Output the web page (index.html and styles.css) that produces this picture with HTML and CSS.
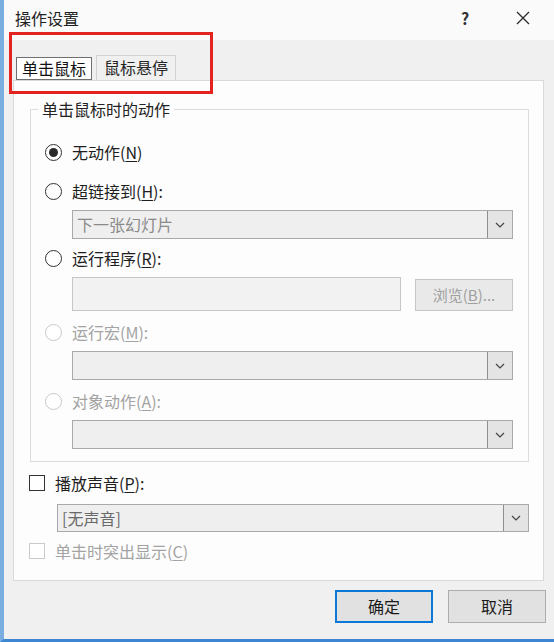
FILE: index.html
```html
<!DOCTYPE html>
<html lang="zh-CN">
<head>
  <meta charset="UTF-8">
  <title>操作设置</title>
  <link rel="stylesheet" href="styles.css">
</head>
<body>

  <div class="window">
    <div class="titlebar">
      <span class="title">操作设置</span>
      <span class="help">?</span>
      <span class="close">
        <svg width="14" height="14" viewBox="0 0 14 14"><path d="M1 1L13 13M13 1L1 13" stroke="#2b2b2b" stroke-width="1.3" fill="none"/></svg>
      </span>
    </div>

    <div class="content">
      <div class="tabs">
        <div class="tab active">单击鼠标</div>
        <div class="tab">鼠标悬停</div>
      </div>

      <div class="panel">
        <fieldset class="group">
          <legend>单击鼠标时的动作</legend>

          <div class="row first"><span class="radio checked"></span><span>无动作(<u>N</u>)</span></div>

          <div class="row gap"><span class="radio"></span><span>超链接到(<u>H</u>):</span></div>
          <div class="select">
            <span class="value">下一张幻灯片</span>
            <span class="arrow"><svg width="10" height="6" viewBox="0 0 10 6"><path d="M1 1L5 5L9 1" stroke="#444" stroke-width="1.2" fill="none"/></svg></span>
          </div>

          <div class="row"><span class="radio"></span><span>运行程序(<u>R</u>):</span></div>
          <div class="field-row">
            <div class="input"></div>
            <div class="browse">浏览(<u>B</u>)...</div>
          </div>

          <div class="row off"><span class="radio"></span><span>运行宏(<u>M</u>):</span></div>
          <div class="select">
            <span class="value"></span>
            <span class="arrow"><svg width="10" height="6" viewBox="0 0 10 6"><path d="M1 1L5 5L9 1" stroke="#444" stroke-width="1.2" fill="none"/></svg></span>
          </div>

          <div class="row off"><span class="radio"></span><span>对象动作(<u>A</u>):</span></div>
          <div class="select">
            <span class="value"></span>
            <span class="arrow"><svg width="10" height="6" viewBox="0 0 10 6"><path d="M1 1L5 5L9 1" stroke="#444" stroke-width="1.2" fill="none"/></svg></span>
          </div>
        </fieldset>

        <div class="check-row"><span class="checkbox"></span><span>播放声音(<u>P</u>):</span></div>
        <div class="select sound">
          <span class="value">[无声音]</span>
          <span class="arrow"><svg width="10" height="6" viewBox="0 0 10 6"><path d="M1 1L5 5L9 1" stroke="#444" stroke-width="1.2" fill="none"/></svg></span>
        </div>
        <div class="check-row off"><span class="checkbox"></span><span>单击时突出显示(<u>C</u>)</span></div>
      </div>

      <div class="buttons">
        <div class="btn primary">确定</div>
        <div class="btn">取消</div>
      </div>
    </div>

    <!-- 红色标注框 -->
    <div class="highlight"></div>
  </div>

</body>
</html>
```

FILE: styles.css
```css
* {
  box-sizing: border-box;
}
body {
  margin: 0;
  font-family: "Noto Sans CJK SC", "Noto Sans", sans-serif;
  font-size: 16px;
  color: #1e1e1e;
  background: #f0f0f0;
}
u {
  text-decoration-thickness: 1px;
  text-underline-offset: 2px;
}
.window {
  position: relative;
  width: 554px;
  height: 642px;
  background: #f0f0f0;
  border-left: 4px solid #7aaee0;
  border-bottom: 3px solid #3d86d4;
}
.titlebar {
  height: 40px;
  background: #fafafa;
  display: flex;
  align-items: center;
  padding: 0 24px 4px 11px;
}
.title {
  color: #222;
}
.help {
  margin-left: auto;
  width: 8px;
  font-weight: bold;
  color: #333;
}
.close {
  margin-left: 47px;
  display: flex;
}
.content {
  padding: 15px 8px 0 9px;
}
.tabs {
  display: flex;
  align-items: flex-end;
  gap: 4px;
  height: 25px;
  padding-left: 3px;
}
.tab {
  height: 25px;
  padding: 0 7px;
  line-height: 23px;
  border: 1px solid #d3d3d3;
  border-bottom: none;
  background: #f0f0f0;
  color: #262626;
}
.tab.active {
  height: 23px;
  padding: 0 5px;
  line-height: 21px;
  border: 1px solid #6f6f6f;
  background: #fff;
  color: #111;
}
.panel {
  margin-right: 2px;
  background: #fdfdfd;
  border: 1px solid #d9d9d9;
  padding: 18px 14px 17px 16px;
}
.group {
  margin: 0;
  min-width: 0;
  border: 1px solid #dcdcdc;
  padding: 0 15px 12px 14px;
}
.group legend {
  margin-left: -7px;
  padding: 0 4px;
  line-height: 20px;
  color: #222;
}
.row {
  display: flex;
  align-items: center;
  gap: 10px;
  height: 24px;
  margin-top: 7px;
}
.row.first {
  margin-top: 21px;
}
.row.gap {
  margin-top: 15px;
}
.row.off {
  color: #a3a3a3;
  margin-top: 9px;
}
.radio {
  position: relative;
  width: 17px;
  height: 17px;
  border: 1.5px solid #333;
  border-radius: 50%;
  background: #fff;
}
.radio.checked::after {
  content: "";
  position: absolute;
  inset: 3px;
  border-radius: 50%;
  background: #2b2b2b;
}
.row.off .radio {
  border-color: #c9c9c9;
}
.select {
  display: flex;
  height: 29px;
  margin: 7px 0 0 27px;
  border: 1px solid #a9a9a9;
  background: #efefef;
  color: #8a8a8a;
}
.select .value {
  flex: 1;
  padding-left: 4px;
  line-height: 27px;
}
.select .arrow {
  width: 25px;
  border-left: 1px solid #8e8e8e;
  background: #e4e4e4;
  display: flex;
  align-items: center;
  justify-content: center;
}
.field-row {
  display: flex;
  gap: 14px;
  margin: 7px 0 0 27px;
}
.input {
  width: 329px;
  height: 34px;
  border: 1px solid #c6c6c6;
  background: #f2f2f2;
}
.browse {
  width: 98px;
  height: 32px;
  margin-top: 2px;
  border: 1px solid #c6c6c6;
  background: #e9e9e9;
  color: #a0a0a0;
  font-size: 15px;
  line-height: 30px;
  text-align: center;
}
.check-row {
  display: flex;
  align-items: center;
  gap: 10px;
  height: 24px;
  margin: 9px 0 0 -1px;
}
.checkbox {
  width: 16px;
  height: 16px;
  border: 1.5px solid #333;
  background: #fff;
}
.check-row.off {
  margin-top: 7px;
  color: #a3a3a3;
}
.check-row.off .checkbox {
  border-color: #cacaca;
}
.select.sound {
  height: 28px;
  margin-top: 9px;
  color: #6a6a6a;
}
.select.sound .value {
  line-height: 26px;
}
.buttons {
  display: flex;
  justify-content: flex-end;
  gap: 15px;
  margin-top: 9px;
}
.btn {
  width: 98px;
  height: 33px;
  line-height: 31px;
  text-align: center;
  border: 1px solid #adadad;
  background: #e1e1e1;
  color: #1a1a1a;
}
.btn.primary {
  border: 2px solid #0b78d7;
  line-height: 29px;
}
.highlight {
  position: absolute;
  left: 5px;
  top: 32px;
  width: 204px;
  height: 62px;
  border: 3px solid #e2231f;
}
```
